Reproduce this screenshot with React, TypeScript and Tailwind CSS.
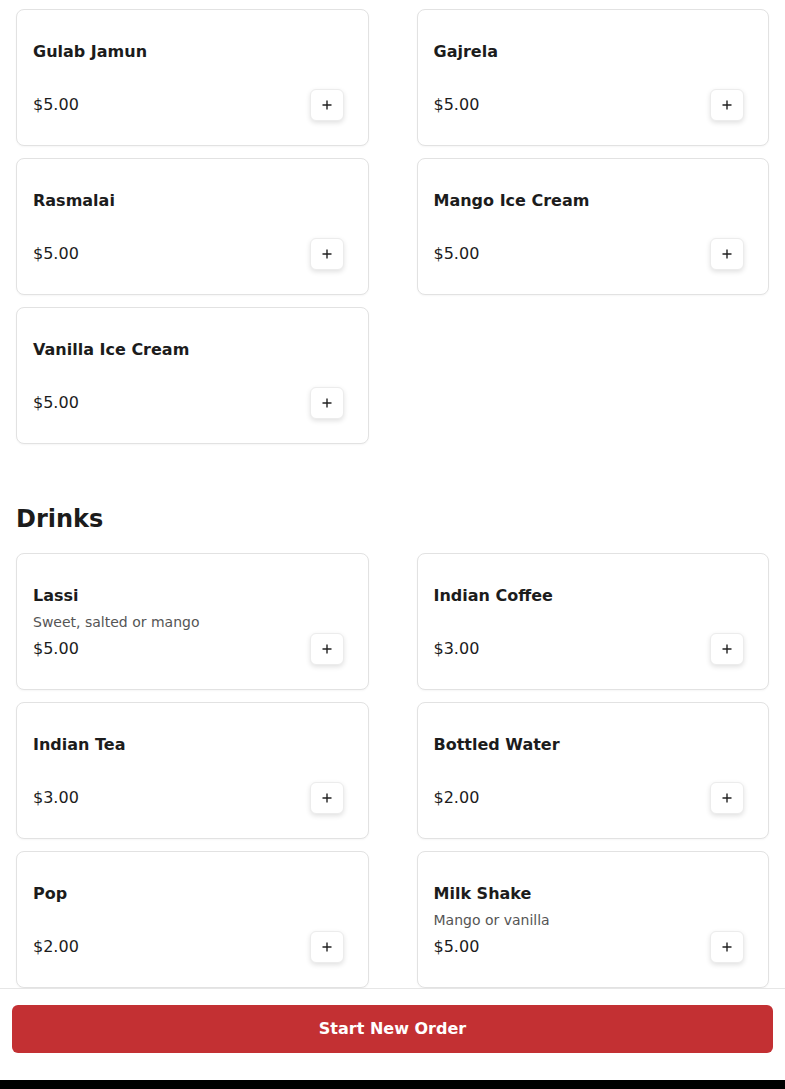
import React from 'react';

interface MenuItem {
  name: string;
  price: string;
  description?: string;
}

const desserts: MenuItem[] = [
  { name: 'Gulab Jamun', price: '$5.00' },
  { name: 'Gajrela', price: '$5.00' },
  { name: 'Rasmalai', price: '$5.00' },
  { name: 'Mango Ice Cream', price: '$5.00' },
  { name: 'Vanilla Ice Cream', price: '$5.00' },
];

const drinks: MenuItem[] = [
  { name: 'Lassi', price: '$5.00', description: 'Sweet, salted or mango' },
  { name: 'Indian Coffee', price: '$3.00' },
  { name: 'Indian Tea', price: '$3.00' },
  { name: 'Bottled Water', price: '$2.00' },
  { name: 'Pop', price: '$2.00' },
  { name: 'Milk Shake', price: '$5.00', description: 'Mango or vanilla' },
];

function ItemCard({ item }: { item: MenuItem }) {
  return (
    <div className="h-[137px] rounded-lg border border-[#e2e2e2] bg-white pl-4 pr-6 pt-[29px] shadow-[0_1px_2px_rgba(0,0,0,0.04)]">
      <h3 className="text-[16px] font-bold leading-[26px] text-[#1c1c1c]">{item.name}</h3>
      <p className="mt-[3px] h-5 text-[14px] leading-5 text-[#555]">{item.description ?? ''}</p>
      <div className="mt-[5px] flex h-6 items-center justify-between">
        <span className="text-[16px] leading-6 text-[#1c1c1c]">{item.price}</span>
        <button className="flex h-8 w-[34px] items-center justify-center rounded-md border border-[#ececec] bg-white text-[#222] shadow-[0_2px_5px_rgba(0,0,0,0.12)]">
          <svg width="10" height="10" viewBox="0 0 10 10">
            <path d="M5 0.5v9M0.5 5h9" stroke="currentColor" strokeWidth="1.4" />
          </svg>
        </button>
      </div>
    </div>
  );
}

function Section({ title, items }: { title?: string; items: MenuItem[] }) {
  return (
    <section>
      {title && (
        <h2 className="mb-[18px] text-2xl font-bold leading-8 text-[#1c1c1c]">{title}</h2>
      )}
      <div className="grid grid-cols-2 gap-x-12 gap-y-3">
        {items.map((item) => (
          <ItemCard key={item.name} item={item} />
        ))}
      </div>
    </section>
  );
}

export default function App() {
  return (
    <div
      className="flex h-[1089px] flex-col overflow-hidden bg-white"
      style={{ fontFamily: '"DejaVu Sans", sans-serif' }}
    >
      {/* Menu list */}
      <main className="flex-1 overflow-hidden px-4 pt-[9px]">
        <Section items={desserts} />
        <div className="mt-[59px]">
          <Section title="Drinks" items={drinks} />
        </div>
      </main>

      {/* Footer */}
      <footer className="border-t border-[#e6e6e6] bg-white px-3 pb-[27px] pt-4">
        <button className="h-12 w-full rounded-md bg-[#c33033] text-[16px] font-bold text-white">
          Start New Order
        </button>
      </footer>
      <div className="h-[9px] bg-black" />
    </div>
  );
}
